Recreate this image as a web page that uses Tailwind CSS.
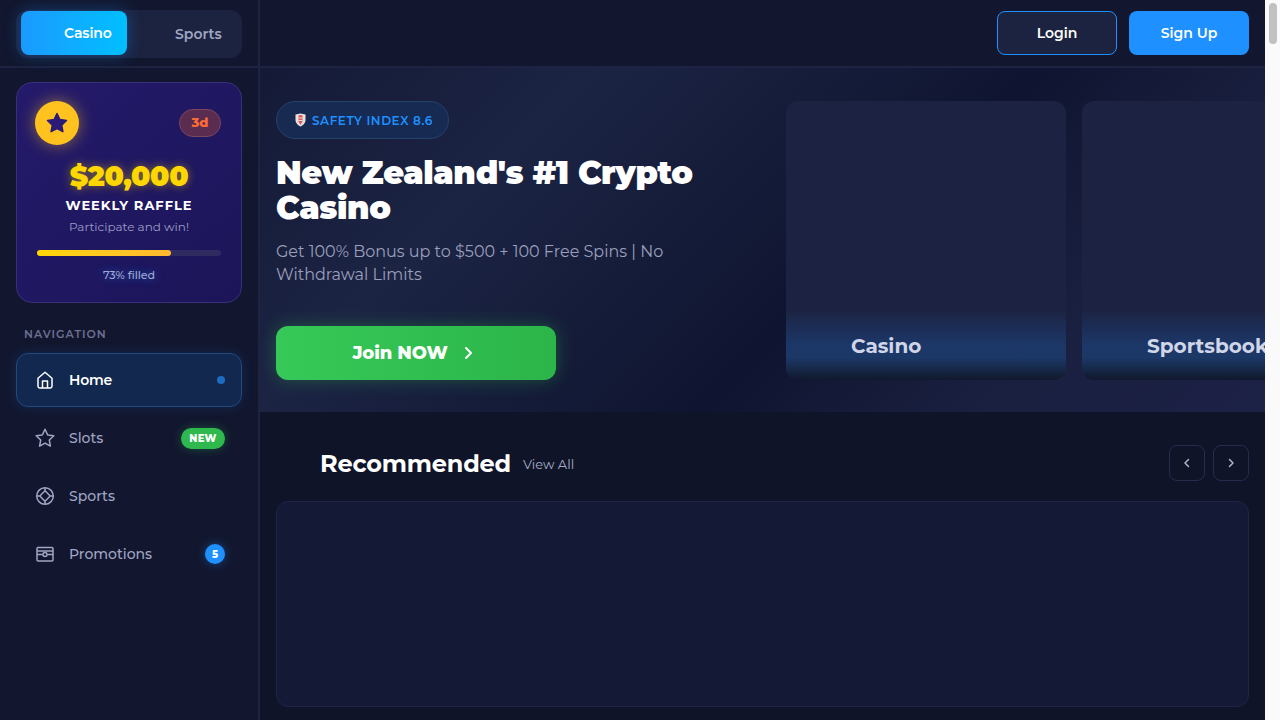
<!DOCTYPE html>
<html lang="en">
<head>
<meta charset="utf-8">
<title>Casino</title>
<script src="https://cdn.jsdelivr.net/npm/@tailwindcss/browser@4"></script>
</head>
<body class="bg-[#0f1429] text-white font-['Montserrat','Inter',sans-serif]">
<div class="flex h-[720px] overflow-hidden">
  <aside class="w-[260px] shrink-0 bg-[#12172f] border-r-2 border-[#1d2340]">
    <div class="h-[68px] border-b-2 border-[#1d2340] px-4 pt-[10px]">
      <div class="h-[48px] rounded-xl bg-[#1c2340] flex items-start pl-[5px] pt-px">
        <div class="w-[106px] h-[44px] rounded-lg bg-gradient-to-r from-[#1a9aff] to-[#00bfff] shadow-[0_0_16px_rgba(30,144,255,0.35)] pl-[43px] flex items-center text-[14px] font-semibold tracking-[-0.1px]">Casino</div>
        <div class="pl-[48px] h-[46px] flex items-center text-[14px] font-semibold text-[#a0a6c4]">Sports</div>
      </div>
    </div>
    <div class="px-4 pt-[14px]">
      <section class="h-[221px] rounded-2xl border border-[#3a2f7a] bg-gradient-to-br from-[#241a6b] to-[#1c1558] pl-[18px] pr-[20px] pt-[18px]">
        <div class="flex items-center justify-between h-[44px]">
          <div class="w-[44px] h-[44px] rounded-full bg-[#ffc21f] shadow-[0_0_16px_rgba(255,193,31,0.5)] flex items-center justify-center">
            <svg width="24" height="24" viewBox="0 0 24 24" fill="#2a1b78" stroke="#2a1b78" stroke-width="1.5" stroke-linejoin="round"><path d="M12 2.500l2.900 6.100 6.600.9-4.800 4.600 1.200 6.600-5.900-3.200-5.900 3.200 1.200-6.600L2.500 9.500l6.600-.9z"/></svg>
          </div>
          <div class="w-[42px] h-[28px] rounded-full border border-[#7a4660] bg-[#5a2c50] flex items-center justify-center text-[13px] font-extrabold text-[#ff6b35]">3d</div>
        </div>
        <div class="mt-[14px] -mr-[2px] text-center text-[28px] leading-[34px] font-black tracking-[-0.3px] text-[#ffd700] [text-shadow:0_0_10px_rgba(255,215,0,0.45)]">$20,000</div>
        <div class="mt-[4px] -mr-[2px] text-center text-[13px] leading-[16px] font-bold tracking-[1px]">WEEKLY RAFFLE</div>
        <div class="mt-[6px] -mr-[2px] text-center text-[12px] leading-[16px] text-[#9a9cc4]">Participate and win!</div>
        <div class="mt-[15px] ml-[2px] h-[6px] rounded-full bg-[#2f2a60]">
          <div class="w-[73%] h-full rounded-full bg-gradient-to-r from-[#ffd700] to-[#ffb830]"></div>
        </div>
        <div class="mt-[12px] -mr-[2px] text-center text-[11px] leading-[14px] font-medium text-[#a0a8d4] [text-shadow:0_0_8px_rgba(30,144,255,0.6)]">73% filled</div>
      </section>
      <div class="mt-[24px] px-2 text-[11px] leading-[14px] font-semibold tracking-[1px] text-[#6c7092]">NAVIGATION</div>
      <nav class="mt-[12px] flex flex-col gap-1">
        <a class="h-[54px] rounded-xl border border-[#1e4a80] bg-[#12284f] shadow-[0_0_12px_rgba(30,144,255,0.15)] flex items-center pl-[18px] pr-4 text-[14px] font-semibold tracking-[-0.2px]">
          <svg class="mr-[14px]" width="20" height="20" viewBox="0 0 20 20" fill="none" stroke="currentColor" stroke-width="1.5" stroke-linejoin="round"><path d="M3 8.200 10 2.300l7 5.900v8a1.700 1.700 0 0 1-1.700 1.700H4.700A1.700 1.700 0 0 1 3 16.200z"/><path d="M7.500 18v-7h5v7"/></svg>
          <span class="flex-1">Home</span>
          <span class="w-2 h-2 rounded-full bg-[#1e6cc0]"></span>
        </a>
        <a class="h-[54px] flex items-center pl-[19px] pr-[17px] text-[14px] font-medium text-[#a0a6c4]">
          <svg class="mr-[14px]" width="20" height="20" viewBox="0 0 20 20" fill="none" stroke="currentColor" stroke-width="1.500" stroke-linejoin="round"><path d="M10 1.200l2.700 5.800 6.100.8-4.500 4.200 1.100 6.100L10 15.100l-5.400 3 1.100-6.100L1.200 7.800l6.100-.8z"/></svg>
          <span class="flex-1">Slots</span>
          <span class="w-[44px] h-[21px] rounded-full bg-[#2eb84e] shadow-[0_0_10px_rgba(46,184,78,0.35)] flex items-center justify-center text-[10px] font-extrabold text-white tracking-[0.3px]">NEW</span>
        </a>
        <a class="h-[54px] flex items-center pl-[19px] pr-[17px] text-[14px] font-medium text-[#a0a6c4]">
          <svg class="mr-[14px]" width="20" height="20" viewBox="0 0 20 20" fill="none" stroke="currentColor" stroke-width="1.500" stroke-linejoin="round"><circle cx="10" cy="10" r="8.300"/><path d="M10 4.800 15.200 10 10 15.200 4.800 10z"/><path d="M10 1.700v3.100M10 15.200v3.100M1.700 10h3.100M15.200 10h3.100"/></svg>
          <span class="flex-1">Sports</span>
        </a>
        <a class="h-[54px] flex items-center pl-[19px] pr-[17px] text-[14px] font-medium text-[#a0a6c4]">
          <svg class="mr-[14px]" width="20" height="20" viewBox="0 0 20 20" fill="none" stroke="currentColor" stroke-width="1.500" stroke-linejoin="round"><rect x="2" y="3.500" width="16" height="13.500" rx="1"/><path d="M2 7h16M2 10.500h5.500M12.500 10.500H18"/><circle cx="10" cy="10.500" r="2"/></svg>
          <span class="flex-1">Promotions</span>
          <span class="w-[20px] h-[20px] rounded-full bg-[#1e90ff] shadow-[0_0_10px_rgba(30,144,255,0.4)] flex items-center justify-center text-[10px] font-extrabold text-white">5</span>
        </a>
      </nav>
    </div>
  </aside>
  <main class="flex-1 min-w-0">
    <header class="h-[68px] border-b-2 border-[#1d2340] bg-[#12172f] flex items-start justify-end gap-3 px-4 pt-[11px]">
      <button class="w-[120px] h-[44px] rounded-lg border border-[#1e90ff] bg-[#1c2340] text-[14px] font-semibold text-white">Login</button>
      <button class="w-[120px] h-[44px] rounded-lg bg-[#1e90ff] text-[14px] font-semibold text-white">Sign Up</button>
    </header>
    <section class="h-[344px] overflow-hidden bg-[linear-gradient(135deg,#141a36_0%,#1c2444_25%,#0f1530_58%,#1a2040_80%,#1c2146_100%)] flex pl-4 pt-[33px]">
      <div class="w-[510px] shrink-0">
        <div class="inline-flex h-[38px] items-center rounded-full border border-[#23426f] bg-[#172a52] pl-[17px] pr-[15px] pt-px text-[12px] font-semibold tracking-[0.56px] text-[#1e90ff]">
          <svg class="mr-[5px] -mt-px" width="13" height="14" viewBox="0 0 13 14"><path d="M1.500 1.500 6.500.5l5 1v5.500c0 3-2.500 5.500-5 6.500-2.500-1-5-3.500-5-6.500z" fill="#e8e0e0"/><path d="M4.500 2.500 6.500 2l2 .5v6L6.500 12l-2-3.500z" fill="#e0564f"/><path d="M4.500 5h4M4.500 7.500h4" stroke="#e8e0e0"/></svg>
          SAFETY INDEX 8.6
        </div>
        <h1 class="mt-[16px] w-[450px] text-[32px] leading-[35px] font-black tracking-[-0.4px] text-white">New Zealand's #1 Crypto Casino</h1>
        <p class="mt-[15px] w-[420px] text-[16px] leading-[23px] text-[#9a9fbc]">Get 100% Bonus up to $500 + 100 Free Spins | No Withdrawal Limits</p>
        <button class="mt-[40px] w-[280px] h-[54px] rounded-xl pr-[4px] bg-gradient-to-r from-[#36c958] to-[#2cb549] shadow-[0_0_18px_rgba(46,184,78,0.35)] flex items-center justify-center text-[18px] font-extrabold tracking-[-0.1px] text-white gap-[12px]">
          Join NOW
          <svg width="16" height="16" viewBox="0 0 16 16" fill="none" stroke="currentColor" stroke-width="2" stroke-linecap="round" stroke-linejoin="round"><path d="M6 3l5 5-5 5"/></svg>
        </button>
      </div>
      <div class="flex gap-4 shrink-0 h-[279px]">
        <div class="w-[280px] h-full rounded-xl overflow-hidden bg-[#1c2342] flex flex-col justify-end">
          <div class="h-[70px] pl-[65px] pt-[2px] flex items-center bg-[linear-gradient(180deg,#1c2342_0%,#1c3768_50%,#1b3866_68%,#11182c_100%)] text-[20px] font-bold text-[#d0d6e8]">Casino</div>
        </div>
        <div class="w-[280px] h-full rounded-xl overflow-hidden bg-[#1c2342] flex flex-col justify-end">
          <div class="h-[70px] pl-[65px] pt-[2px] flex items-center bg-[linear-gradient(180deg,#1c2342_0%,#1c3768_50%,#1b3866_68%,#11182c_100%)] text-[20px] font-bold text-[#d0d6e8] whitespace-nowrap">Sportsbook</div>
        </div>
      </div>
    </section>
    <section class="px-4">
      <div class="h-[89px] flex items-center pl-[44px] pt-[13px]">
        <h2 class="pt-[2px] text-[24px] font-bold tracking-[-0.2px] text-white">Recommended</h2>
        <a class="ml-3 text-[13px] text-[#a8acc6] pt-[4px]">View All</a>
        <div class="ml-auto flex gap-2">
          <button class="w-9 h-9 rounded-lg border border-[#262c4c] flex items-center justify-center text-[#b0b4cc]"><svg width="12" height="12" viewBox="0 0 12 12" fill="none" stroke="currentColor" stroke-width="1.500" stroke-linecap="round" stroke-linejoin="round"><path d="M7.500 2.500 4 6l3.500 3.500"/></svg></button>
          <button class="w-9 h-9 rounded-lg border border-[#262c4c] flex items-center justify-center text-[#b0b4cc]"><svg width="12" height="12" viewBox="0 0 12 12" fill="none" stroke="currentColor" stroke-width="1.500" stroke-linecap="round" stroke-linejoin="round"><path d="M4.500 2.500 8 6l-3.500 3.500"/></svg></button>
        </div>
      </div>
      <div class="h-[206px] rounded-xl border border-[#1f2542] bg-[#141a35]"></div>
    </section>
  </main>
  <div class="w-[15px] shrink-0 bg-[#fafafa] pl-[4px] pr-[3px] pt-[3px]">
    <div class="h-[41px] rounded-full bg-[#c1c1c1]"></div>
  </div>
</div>
</body>
</html>
